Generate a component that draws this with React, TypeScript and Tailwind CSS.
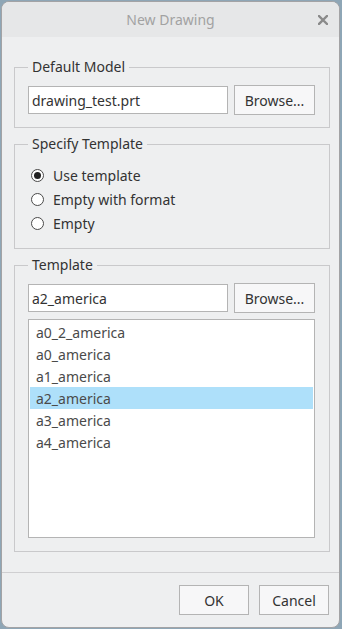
import { useState } from 'react'

const templates = ['a0_2_america', 'a0_america', 'a1_america', 'a2_america', 'a3_america', 'a4_america']
const modes = ['Use template', 'Empty with format', 'Empty']

function Button({ label, className = '' }: { label: string; className?: string }) {
  return (
    <button
      type="button"
      className={`h-[30px] border border-[#b4b4b4] bg-[#f7f7f8] text-[14px] text-[#333] ${className}`}
    >
      {label}
    </button>
  )
}

function Group({ title, children, className = '' }: { title: string; children: React.ReactNode; className?: string }) {
  return (
    <fieldset className={`ml-[12px] w-[316px] border border-[#c9c9cb] px-[13px] ${className}`}>
      <legend className="px-[4px] text-[14px] leading-[20px] text-[#333]">{title}</legend>
      {children}
    </fieldset>
  )
}

export default function App() {
  const [mode, setMode] = useState(0)
  const [selected, setSelected] = useState(3)

  return (
    <div className="h-[629px] w-[342px] bg-[#8ea6b6] pl-[1px] pt-[1px] font-['Noto_Sans',sans-serif]">
      <div className="flex h-[627px] w-[339px] flex-col overflow-hidden rounded-[8px] border border-[#a3a3a5] bg-[#eeeff0]">
        <div className="relative flex h-[35px] shrink-0 items-center justify-center bg-[#e6e7e8]">
          <span className="text-[14px] text-[#a2a2a2]">New Drawing</span>
          <svg className="absolute right-[11px] top-[13px]" width="10" height="10" viewBox="0 0 10 10">
            <path d="M1 1L9 9M9 1L1 9" stroke="#8a8a8a" strokeWidth="2.4" strokeLinecap="square" />
          </svg>
        </div>

        <Group title="Default Model" className="mt-[20px] pb-[12px] pt-[8px]">
          <div className="flex items-center gap-[6px]">
            <div className="flex h-[28px] w-[200px] items-center border border-[#b4b4b4] bg-white px-[3px] text-[14px] text-[#333]">
              drawing_test.prt
            </div>
            <Button label="Browse..." className="w-[81px]" />
          </div>
        </Group>

        <Group title="Specify Template" className="mt-[6px] pb-[13px] pt-[9px]">
          {modes.map((m, i) => (
            <div key={m} className="flex h-[24px] cursor-default items-center gap-[9px] pl-[3px]" onClick={() => setMode(i)}>
              <span className="flex h-[13px] w-[13px] items-center justify-center rounded-full border border-[#4a4a4a] bg-white">
                {mode === i && <span className="h-[7px] w-[7px] rounded-full bg-[#222]" />}
              </span>
              <span className="text-[14px] text-[#333]">{m}</span>
            </div>
          ))}
        </Group>

        <Group title="Template" className="mt-[6px] pb-[13px] pt-[8px]">
          <div className="flex items-center gap-[6px]">
            <div className="flex h-[28px] w-[200px] items-center border border-[#b4b4b4] bg-white px-[3px] text-[14px] text-[#333]">
              {templates[selected]}
            </div>
            <Button label="Browse..." className="w-[81px]" />
          </div>
          <div className="mt-[6px] h-[219px] w-[287px] border border-[#b4b4b4] bg-white p-[1px]">
            {templates.map((t, i) => (
              <div
                key={t}
                onClick={() => setSelected(i)}
                className={`flex h-[22px] cursor-default items-center px-[6px] text-[14px] text-[#4a4a4a] ${i === selected ? 'bg-[#aee0fa]' : ''}`}
              >
                {t}
              </div>
            ))}
          </div>
        </Group>

        <div className="flex-1" />
        <div className="flex h-[55px] shrink-0 items-start justify-end gap-[10px] border-t border-[#cfcfd1] pr-[10px] pt-[12px]">
          <Button label="OK" className="w-[70px]" />
          <Button label="Cancel" className="w-[70px]" />
        </div>
      </div>
    </div>
  )
}
